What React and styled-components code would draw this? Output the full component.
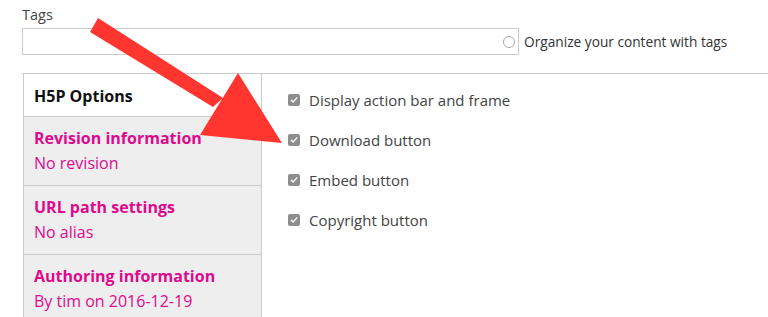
import * as React from "react";
import styled, { createGlobalStyle } from "styled-components";

const GlobalStyle = createGlobalStyle`
  html, body {
    margin: 0;
    padding: 0;
    background: #fff;
  }
  body {
    font-family: "Open Sans", "Liberation Sans", sans-serif;
    color: #333;
  }
`;

const Page = styled.div`
  position: relative;
  width: 768px;
  height: 317px;
  overflow: hidden;
`;

// Tags field
const Field = styled.div`
  padding: 5px 0 0 22px;
`;

const Label = styled.div`
  font-size: 14.5px;
  line-height: 20px;
  color: #444;
  margin-bottom: 3px;
`;

const FieldRow = styled.div`
  display: flex;
  align-items: center;
  gap: 5px;
`;

const InputBox = styled.div`
  position: relative;
  box-sizing: border-box;
  width: 497px;
  height: 27px;
  border: 1px solid #ccc;
  background: #fff;
`;

const Throbber = styled.span`
  position: absolute;
  right: 3px;
  top: 7px;
  box-sizing: border-box;
  width: 12px;
  height: 12px;
  border: 1.5px solid #aaa;
  border-radius: 50%;
`;

const Description = styled.span`
  font-size: 13.7px;
  color: #333;
`;

// Vertical tabs
const VerticalTabs = styled.div`
  display: grid;
  grid-template-columns: 240px 1fr;
  margin: 18px 0 0 22px;
  border-top: 1px solid #ccc;
`;

const TabMenu = styled.div`
  border-left: 1px solid #ccc;
  border-right: 1px solid #ccc;
  margin-left: 1px;
`;

const Tab = styled.div`
  box-sizing: border-box;
  height: ${(p) => (p.$active ? "43px" : "69px")};
  padding: ${(p) => (p.$active ? "11px 10px 0" : "10px 10px 0")};
  background: ${(p) => (p.$active ? "#fff" : "#eee")};
  border-bottom: 1px solid #ccc;
`;

const TabTitle = styled.div`
  font-size: 16px;
  font-weight: 700;
  line-height: 22px;
  color: ${(p) => (p.$active ? "#111" : "#dd0a8f")};
`;

const TabSummary = styled.div`
  font-size: 16px;
  line-height: 22px;
  margin-top: 3px;
  color: #dd0a8f;
`;

const Pane = styled.div`
  display: flex;
  flex-direction: column;
  gap: 20px;
  padding: 16px 0 0 26px;
`;

const Option = styled.label`
  display: flex;
  align-items: center;
  gap: 9px;
  font-size: 15px;
  line-height: 20px;
  color: #444;
`;

const Check = styled.span`
  display: inline-flex;
  align-items: center;
  justify-content: center;
  width: 12px;
  height: 12px;
  border-radius: 2px;
  background: #8d8d8d;
`;

const Arrow = styled.svg`
  position: absolute;
  left: 0;
  top: 0;
  pointer-events: none;
`;

const options = [
  "Display action bar and frame",
  "Download button",
  "Embed button",
  "Copyright button",
];

const tabs = [
  { title: "Revision information", summary: "No revision" },
  { title: "URL path settings", summary: "No alias" },
  { title: "Authoring information", summary: "By tim on 2016-12-19" },
];

const App = () => {
  return (
    <Page>
      <GlobalStyle />
      <Field>
        <Label>Tags</Label>
        <FieldRow>
          <InputBox>
            <Throbber />
          </InputBox>
          <Description>Organize your content with tags</Description>
        </FieldRow>
      </Field>
      <VerticalTabs>
        <TabMenu>
          <Tab $active>
            <TabTitle $active>H5P Options</TabTitle>
          </Tab>
          {tabs.map((t) => (
            <Tab key={t.title}>
              <TabTitle>{t.title}</TabTitle>
              <TabSummary>{t.summary}</TabSummary>
            </Tab>
          ))}
        </TabMenu>
        <Pane>
          {options.map((o) => (
            <Option key={o}>
              <Check>
                <svg width="8" height="8" viewBox="0 0 8 8">
                  <path
                    d="M1.3 4.2 L3.2 6 L6.8 1.8"
                    fill="none"
                    stroke="#fff"
                    strokeWidth="1.3"
                    strokeLinecap="round"
                    strokeLinejoin="round"
                  />
                </svg>
              </Check>
              {o}
            </Option>
          ))}
        </Pane>
      </VerticalTabs>
      <Arrow width="768" height="317">
        <polygon points="98,18 90,32 213,107 223,98" fill="#ff3530" />
        <polygon points="238,73 200,135 282,143" fill="#ff3530" />
      </Arrow>
    </Page>
  );
};

export default App;
